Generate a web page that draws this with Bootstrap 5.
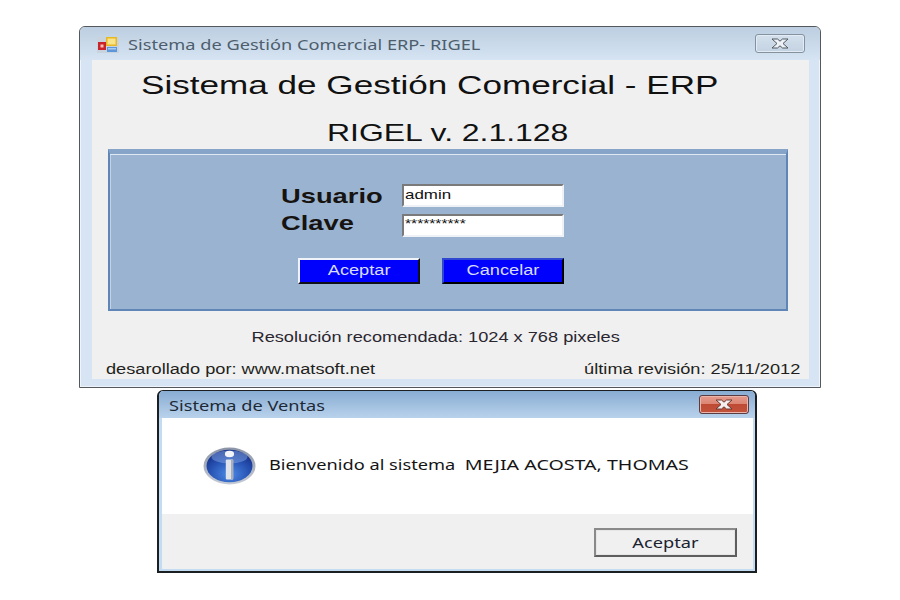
<!DOCTYPE html>
<html lang="es">
<head>
  <meta charset="UTF-8">
  <meta name="viewport" content="width=device-width, initial-scale=1.0">
  <title>Sistema de Gestión Comercial ERP- RIGEL</title>
  <link href="https://cdn.jsdelivr.net/npm/bootstrap@5.3.0/dist/css/bootstrap.min.css" rel="stylesheet">
  <style>
    body {
      background: #fff;
      font-family: "Liberation Sans", Arial, sans-serif;
      color: #111;
      overflow: hidden;
    }
    /* the screenshot is stretched sideways, so text is too */
    .wide { display: inline-block; white-space: pre; transform: scaleX(1.3); transform-origin: left center; line-height: 1; }
    .wide-center { transform-origin: center center; }
    .wide-right { transform-origin: right center; }
    .wide-more { transform: scaleX(1.35); }
    .wide-sub { transform: scaleX(1.33); }

    .desk-window { position: absolute; }
    .win-login {
      left: 79px; top: 26px; width: 742px; height: 362px;
      border: 1px solid #54575b;
      border-radius: 6px 6px 0 0;
      background: #d6e4f3;
      box-shadow: inset 0 0 0 1px #eef4fa;
      padding: 0 11px 8px 12px;
    }
    .win-msg {
      left: 157px; top: 390px; width: 600px; height: 183px;
      border: 2px solid #1c1f22;
      border-top-width: 1px;
      border-radius: 6px 6px 0 0;
      background: #c4dcf2;
      padding: 0 2px 2px 3px;
    }
    .title-login {
      height: 33px;
      margin: 0 -11px 0 -12px;
      padding: 3px 15px 0 17px;
      background: linear-gradient(#bccee0, #d6e4f3);
      border-radius: 5px 5px 0 0;
    }
    .title-msg {
      height: 27px;
      margin: 0 -2px 0 -3px;
      padding: 0 6px 0 10px;
      background: linear-gradient(#88acd2, #b9d2ec);
      border-radius: 5px 5px 0 0;
    }
    .title-text { font-family: "Noto Sans", sans-serif; font-size: 14px; color: #4e5e6c; margin-left: 1px; }
    .title-text-msg { font-family: "Noto Sans", sans-serif; font-size: 14px; color: #1d2a36; padding-top: 2px; }
    .close-off {
      width: 50px; height: 19px;
      margin-top: -3px;
      border: 1px solid #84919e;
      border-radius: 3px;
      background: linear-gradient(#d4e0ec, #c3d2e2);
      box-shadow: inset 0 0 0 1px #e3ecf4;
    }
    .close-on {
      width: 50px; height: 19px;
      border: 1px solid #5a3c42;
      border-radius: 3px;
      background: linear-gradient(#e59a8c 0, #dc8674 45%, #bf4a34 50%, #c2533c 100%);
      box-shadow: inset 0 0 0 1px #eab5aa;
    }
    .client-login { background: #f0f0f0; height: 319px; padding-top: 8px; }
    .client-msg { height: 151px; background: #fff; }
    .main-title { font-size: 26px; height: 34px; padding-left: 49px; }
    .sub-title { font-size: 24px; height: 32px; margin-top: 15px; padding-right: 5px; }
    .login-panel {
      height: 162px;
      margin: 0 21px 0 16px;
      background: #9ab3d1;
      border: 2px solid #5f86b6;
      border-top: 5px solid #86a4c8;
      box-shadow: inset 0 1px 0 #dfe8f2, inset 1px 0 0 #c4d3e4;
      padding: 30px 0 0 0;
    }
    .login-row { height: 23px; }
    .login-row + .login-row { margin-top: 7px; }
    .login-row + .login-row .login-label { margin-bottom: 5px; }
    .login-label { width: 121px; margin-left: 171px; font-size: 21px; font-weight: 700; color: #161310; }
    .login-input {
      width: 162px; height: 23px;
      padding: 0 1px;
      font-family: "Liberation Sans", Arial, sans-serif;
      font-size: 13px;
      color: #111;
      background: #fff;
      border-width: 2px;
      border-style: solid;
      border-color: #7a7a7a #eef1f5 #eef1f5 #7a7a7a;
      border-radius: 0;
      display: block;
    }
    .input-text { display: block; height: 19px; line-height: 18px; overflow: hidden; }
    .input-mask { font-size: 12px; line-height: 16px; }
    .login-actions { margin-top: 21px; padding-left: 188px; gap: 22px; }
    .blue-btn {
      width: 122px; height: 26px;
      padding: 0 0 2px;
      background: #0000fd;
      color: #d8ddff;
      font-size: 14px;
      border-width: 2px;
      border-style: solid;
      border-color: #f0f3f8 #101018 #101018 #f0f3f8;
      border-radius: 0;
    }
    .blue-btn-flat { border-color: #3048d0 #000 #000 #3048d0; }
    .blue-btn:hover { background: #0000fd; color: #d8ddff; }
    .res-note { font-size: 14px; height: 18px; margin-top: 17px; padding-right: 30px; color: #2a2630; }
    .foot-note { font-size: 14px; height: 18px; margin-top: 14px; padding: 0 9px 0 14px; color: #231f20; }
    .msg-text { font-family: "Noto Sans", sans-serif; font-size: 14px; color: #151515; padding-bottom: 2px; }
    .msg-name { font-size: 15.1px; }
    .msg-body { height: 96px; padding-left: 41px; gap: 13px; }
    .msg-foot { height: 55px; background: #f0f0f0; padding: 14px 16px 0 0; }
    .msg-btn {
      width: 143px; height: 29px;
      padding: 0;
      background: #f0f0f0;
      color: #1b2230;
      font-family: "Noto Sans", sans-serif;
      font-size: 14px;
      border-width: 2px;
      border-style: solid;
      border-color: #8a8a8a #5e5e5e #5e5e5e #8a8a8a;
      border-radius: 0;
      box-shadow: inset 0 0 0 1px #e6e6e6;
    }
  </style>
</head>
<body>
  <div class="desk-window win-login">
    <div class="title-login d-flex align-items-center justify-content-between">
      <div class="d-flex align-items-center">
        <svg width="22" height="16" viewBox="0 0 22 16">
          <rect x="0" y="0" width="22" height="16" fill="#c9d3dd"/>
          <rect x="1" y="5" width="8" height="8" fill="#c8242a"/>
          <rect x="3.5" y="7.5" width="3" height="3" fill="#f4c0b8"/>
          <rect x="9" y="0" width="11" height="9" fill="#e8b820"/>
          <rect x="10.5" y="1.5" width="8" height="6" fill="#f8e48a"/>
          <rect x="10" y="10" width="10" height="5" fill="#5e96dc"/>
          <rect x="11" y="11" width="8" height="1.5" fill="#a8ccf0"/>
        </svg>
        <span class="ms-2"><span class="wide title-text">Sistema de Gestión Comercial ERP- RIGEL</span></span>
      </div>
      <div class="close-off d-flex align-items-center justify-content-center">
        <svg width="20" height="11" viewBox="0 0 20 11">
          <path d="M2 1H7.5L10 3.2L12.5 1H18L13 5.5L18 10H12.5L10 7.8L7.5 10H2L7 5.5Z" fill="#eef2f6" stroke="#4f5860" stroke-width="1"/>
        </svg>
      </div>
    </div>

    <div class="client-login">
      <div class="main-title d-flex align-items-center"><span class="wide wide-more">Sistema de Gestión Comercial - ERP</span></div>
      <div class="sub-title d-flex align-items-center justify-content-center"><span class="wide wide-center wide-sub">RIGEL v. 2.1.128</span></div>

      <div class="login-panel">
        <div class="login-row d-flex align-items-center">
          <div class="login-label"><span class="wide">Usuario</span></div>
          <div class="login-input"><span class="input-text"><span class="wide">admin</span></span></div>
        </div>
        <div class="login-row d-flex align-items-center">
          <div class="login-label"><span class="wide">Clave</span></div>
          <div class="login-input"><span class="input-text input-mask"><span class="wide">**********</span></span></div>
        </div>
        <div class="login-actions d-flex">
          <button type="button" class="btn blue-btn"><span class="wide wide-center">Aceptar</span></button>
          <button type="button" class="btn blue-btn blue-btn-flat"><span class="wide wide-center">Cancelar</span></button>
        </div>
      </div>

      <div class="res-note d-flex align-items-center justify-content-center"><span class="wide wide-center">Resolución recomendada: 1024 x 768 pixeles</span></div>
      <div class="foot-note d-flex align-items-center justify-content-between">
        <span class="wide">desarollado por: www.matsoft.net</span>
        <span class="wide wide-right">última revisión: 25/11/2012</span>
      </div>
    </div>
  </div>

  <div class="desk-window win-msg">
    <div class="title-msg d-flex align-items-center justify-content-between">
      <span class="wide title-text-msg">Sistema de Ventas</span>
      <div class="close-on d-flex align-items-center justify-content-center">
        <svg width="20" height="11" viewBox="0 0 20 11">
          <path d="M2 1H7.5L10 3.2L12.5 1H18L13 5.5L18 10H12.5L10 7.8L7.5 10H2L7 5.5Z" fill="#f4efee" stroke="#6b3a34" stroke-width="1"/>
        </svg>
      </div>
    </div>
    <div class="client-msg">
      <div class="msg-body d-flex align-items-center">
        <svg width="53" height="38" viewBox="0 0 53 38" class="flex-shrink-0">
          <defs>
            <radialGradient id="orb" cx="50%" cy="75%" r="70%">
              <stop offset="0" stop-color="#4d8be6"/>
              <stop offset="0.6" stop-color="#2753b4"/>
              <stop offset="1" stop-color="#17308a"/>
            </radialGradient>
            <linearGradient id="ring" x1="0" y1="0" x2="0" y2="1">
              <stop offset="0" stop-color="#8a94a6"/>
              <stop offset="1" stop-color="#c6ccd6"/>
            </linearGradient>
          </defs>
          <ellipse cx="26.5" cy="19" rx="26" ry="18.5" fill="url(#ring)"/>
          <ellipse cx="26.5" cy="19" rx="23" ry="16.2" fill="url(#orb)"/>
          <ellipse cx="26.5" cy="10" rx="18" ry="6.5" fill="#8fb2ea" opacity="0.45"/>
          <ellipse cx="26.5" cy="7" rx="4.6" ry="3.2" fill="#f2f4f8"/>
          <rect x="22.8" y="12.5" width="7.4" height="20" rx="1" fill="#dfe3ea"/>
          <rect x="28" y="12.5" width="2.2" height="20" fill="#a9afba"/>
        </svg>
        <span class="wide msg-text">Bienvenido al sistema  <span class="msg-name">MEJIA ACOSTA, THOMAS</span></span>
      </div>
      <div class="msg-foot d-flex justify-content-end align-items-start">
        <button type="button" class="btn msg-btn"><span class="wide wide-center">Aceptar</span></button>
      </div>
    </div>
  </div>

  <script src="https://cdn.jsdelivr.net/npm/bootstrap@5.3.0/dist/js/bootstrap.bundle.min.js"></script>
</body>
</html>
